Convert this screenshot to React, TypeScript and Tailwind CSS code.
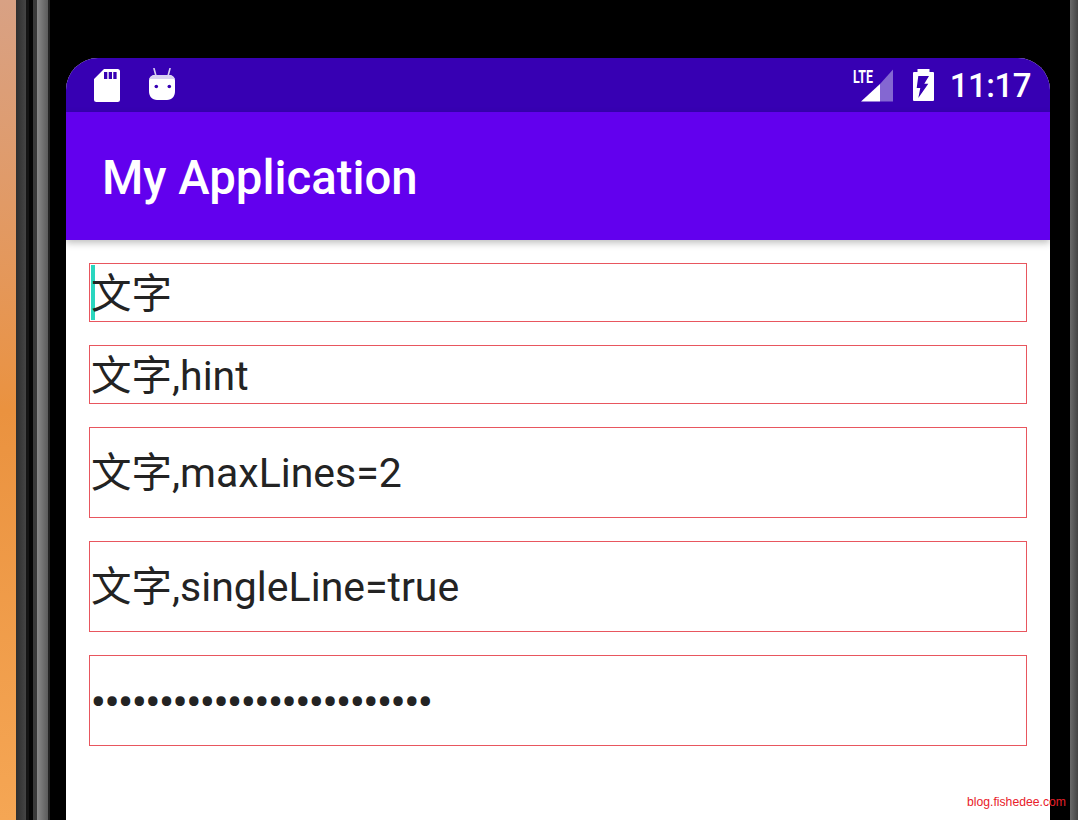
import React from 'react'

const fieldText = "font-['Roboto','Noto_Sans_CJK_SC',sans-serif] text-[41px] leading-none text-[#232323]"

const SdCardIcon = () => (
  <svg width="26" height="33" viewBox="0 0 26 33" className="block">
    <path d="M10 0H23.500a2.500 2.500 0 0 1 2.500 2.500V30.500a2.500 2.500 0 0 1-2.500 2.500H2.500a2.500 2.500 0 0 1-2.500-2.500V10Z" fill="#fff" />
    <rect x="10" y="3" width="3.300" height="7" fill="#3700b3" />
    <rect x="14.700" y="3" width="3.300" height="7" fill="#3700b3" />
    <rect x="19.300" y="3" width="3.300" height="7" fill="#3700b3" />
  </svg>
)

const RobotIcon = () => (
  <svg width="26" height="32" viewBox="0 0 26 32" className="block">
    <path d="M5 0.500L7 8M21 0.500L19 8" stroke="#d9d0f2" strokeWidth="1.600" strokeLinecap="round" />
    <path d="M6 7H20C23.500 7 26 9.500 26 13V23C26 28.500 23 32 18 32H8C3 32 0 28.500 0 23V13C0 9.500 2.500 7 6 7Z" fill="#fff" />
    <path d="M6 7H20C22.800 7 25 8.600 25.700 11H0.300C1 8.600 3.200 7 6 7Z" fill="#d9d0f2" />
    <circle cx="7.300" cy="18.500" r="1.800" fill="#3700b3" />
    <circle cx="20.300" cy="18.500" r="1.800" fill="#3700b3" />
  </svg>
)

const SignalIcon = () => (
  <svg width="41" height="33" viewBox="0 0 41 33" className="block overflow-visible">
    <path d="M40 0.500V32.500H27V15Z" fill="#8467d2" />
    <path d="M27 15V32.500H8Z" fill="#fff" />
    <text x="0" y="14" fill="#fff" fontFamily="Roboto, sans-serif" fontSize="17.500" fontWeight="700" textLength="20" lengthAdjust="spacingAndGlyphs">LTE</text>
  </svg>
)

const BatteryIcon = () => (
  <svg width="21" height="32" viewBox="0 0 21 32" className="block">
    <path d="M4.500 0H16.500V3H20a1 1 0 0 1 1 1V31a1 1 0 0 1-1 1H1a1 1 0 0 1-1-1V4a1 1 0 0 1 1-1H4.500Z" fill="#fff" />
    <path d="M5.300 7H16L11.300 14.700H15.300L5.300 29L7.300 19H3.700Z" fill="#3700b3" />
  </svg>
)

const Field = ({ tall, children }: { tall?: boolean; children: React.ReactNode }) => (
  <div className={`relative flex items-center border border-[#e8565e] pl-[1px] ${tall ? 'h-[91px]' : 'h-[59px]'}`}>
    {children}
  </div>
)

const Cjk = () => <span className="text-[40.5px]">文字</span>

export default function App() {
  return (
    <div className="relative flex h-[820px] w-[1078px] overflow-hidden bg-black">
      {/* desktop behind the emulator, then the phone's left edge */}
      <div className="w-[16px] shrink-0 bg-gradient-to-b from-[#d8a184] via-[#ea923f] to-[#f5a654]" />
      <div className="w-[10px] shrink-0 bg-gradient-to-r from-[#2e2e2e] to-[#454545]" />
      <div className="w-[3px] shrink-0 bg-[#141414]" />
      <div className="w-[4px] shrink-0 bg-[#050505]" />
      <div className="w-[4px] shrink-0 bg-[#3a3a3a]" />
      <div className="w-[11px] shrink-0 bg-gradient-to-r from-[#8a8a8a] to-[#5c5c5c]" />
      <div className="w-[2px] shrink-0 bg-[#222]" />
      <div className="w-[16px] shrink-0 bg-black" />

      <div className="flex w-[984px] shrink-0 flex-col pt-[58px]">
        <div className="flex h-full flex-col overflow-hidden rounded-t-[32px] bg-white">
          <div className="flex h-[54px] shrink-0 items-center bg-[#3700b3] pl-[28px] pr-[19px]">
            <SdCardIcon />
            <div className="ml-[29px] -mt-[3px]">
              <RobotIcon />
            </div>
            <div className="ml-auto flex items-center">
              <SignalIcon />
              <div className="ml-[19px]">
                <BatteryIcon />
              </div>
              <span className="ml-[16px] font-['Roboto',sans-serif] text-[33px] font-medium leading-none tracking-[-0.5px] text-white">11:17</span>
            </div>
          </div>
          <div className="z-10 flex h-[128px] shrink-0 items-center bg-[#6200ee] pl-[36px] pt-[6px] shadow-[0_3px_7px_rgba(0,0,0,0.25)]">
            <span className="font-['Roboto',sans-serif] text-[47.3px] font-medium leading-none text-white">My Application</span>
          </div>
          <div className="flex flex-col gap-[23px] px-[23px] pt-[23px]">
            <Field>
              <span className="absolute left-[1px] top-[1px] h-[55px] w-[4px] bg-[#2ad6bf]" />
              <span className={`relative mt-[4px] ${fieldText}`}><Cjk /></span>
            </Field>
            <Field><span className={`mt-[4px] ${fieldText}`}><Cjk />,hint</span></Field>
            <Field tall><span className={`mt-[2px] ${fieldText}`}><Cjk />,maxLines=2</span></Field>
            <Field tall><span className={`mt-[2px] ${fieldText}`}><Cjk />,singleLine=true</span></Field>
            <Field tall><span className="mt-[4px] font-['Roboto',sans-serif] text-[40px] font-bold leading-none tracking-[-0.75px] text-[#232323]">•••••••••••••••••••••••••</span></Field>
          </div>
        </div>
      </div>

      <div className="w-[20px] shrink-0 bg-black" />
      <div className="w-[8px] shrink-0 bg-gradient-to-r from-[#6a6a6a] to-[#444]" />

      <span className="absolute left-[967px] top-[795px] font-['Liberation_Sans',sans-serif] text-[12.2px] leading-[14px] text-[#e8202a]">blog.fishedee.com</span>
    </div>
  )
}
